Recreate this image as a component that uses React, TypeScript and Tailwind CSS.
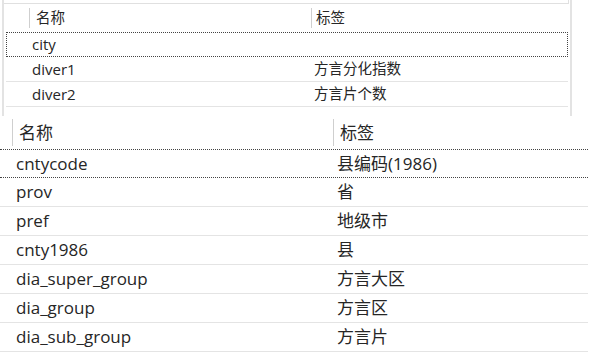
import React from 'react';

const font = { fontFamily: '"Open Sans", "Noto Sans CJK SC", sans-serif' };

const topRows = [
  { name: 'city', label: '', focus: true },
  { name: 'diver1', label: '方言分化指数' },
  { name: 'diver2', label: '方言片个数' },
];

const fields = [
  { name: 'cntycode', label: '县编码(1986)', focus: true },
  { name: 'prov', label: '省' },
  { name: 'pref', label: '地级市' },
  { name: 'cnty1986', label: '县' },
  { name: 'dia_super_group', label: '方言大区' },
  { name: 'dia_group', label: '方言区' },
  { name: 'dia_sub_group', label: '方言片' },
];

export default function App() {
  return (
    <div className="w-[589px] h-[354px] bg-white overflow-hidden text-[#262626]" style={font}>
      {/* upper variable list */}
      <div className="ml-[2px] w-[570px] h-[116px] border-x-2 border-[#e3e3e3]">
        <div className="h-[4px] mr-[1px] border-b border-r border-[#e0e0e0]" />
        <div className="h-[28px] flex items-center text-[14.5px]">
          <div className="ml-[25px] w-[282px] h-[20px] border-l border-[#cfcfcf] pl-[6px] flex items-center">名称</div>
          <div className="h-[20px] border-l border-[#cfcfcf] pl-[4px] flex items-center">标签</div>
        </div>
        <div className="mx-[2px] text-[15px]">
          {topRows.map((r) =>
            r.focus ? (
              <div key={r.name} className="h-[25px] flex items-center border border-dotted border-[#444]">
                <div className="w-[307px] pl-[25px]">{r.name}</div>
                <div className="text-[14.5px]">{r.label}</div>
              </div>
            ) : (
              <div key={r.name} className="h-[25px] flex items-center border-b border-[#e4e4e4]">
                <div className="w-[308px] pl-[26px]">{r.name}</div>
                <div className="text-[14.5px]">{r.label}</div>
              </div>
            )
          )}
        </div>
      </div>

      {/* lower field list */}
      <div className="w-[588px] text-[17px]">
        <div className="h-[33px] flex items-center">
          <div className="ml-[12px] w-[321px] h-[27px] border-l border-[#cfcfcf] pl-[6px] flex items-center">名称</div>
          <div className="h-[27px] border-l border-[#cfcfcf] pl-[6px] flex items-center">标签</div>
        </div>
        {fields.map((f) => (
          <div
            key={f.name}
            className={
              f.focus
                ? 'h-[29px] flex items-center border-y border-dotted border-[#444]'
                : 'h-[29px] flex items-center border-b border-[#e4e4e4]'
            }
          >
            <div className="w-[337px] pl-[16px]">{f.name}</div>
            <div>{f.label}</div>
          </div>
        ))}
      </div>
    </div>
  );
}
